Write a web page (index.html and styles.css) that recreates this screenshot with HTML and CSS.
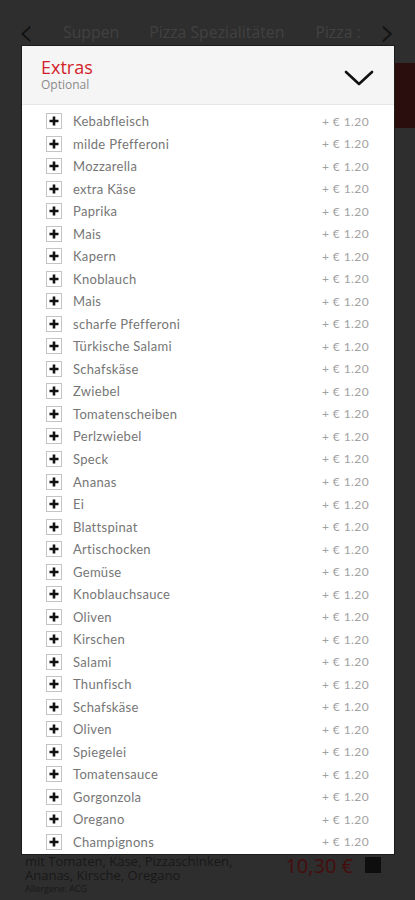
FILE: index.html
```html
<!DOCTYPE html>
<html lang="de">
<head>
<meta charset="utf-8">
<title>Extras</title>
<link rel="stylesheet" href="styles.css">
</head>
<body>
<div class="page">
  <nav class="tabs">
    <span class="arrow">&#x2039;</span>
    <span class="tab t1">Suppen</span>
    <span class="tab t2">Pizza Spezialitäten</span>
    <span class="tab t3">Pizza :</span>
    <span class="arrow right">&#x203A;</span>
  </nav>
  <div class="banner"></div>
  <div class="spacer"></div>
  <div class="product">
    <div class="desc">
      <div>mit Tomaten, Käse, Pizzaschinken,</div>
      <div>Ananas, Kirsche, Oregano</div>
      <div class="allergy">Allergene: ACG</div>
    </div>
    <div class="price">10,30 €</div>
    <div class="addbtn"></div>
  </div>
</div>

<div class="modal">
  <div class="modal-head">
    <div>
      <div class="title">Extras</div>
      <div class="subtitle">Optional</div>
    </div>
    <svg class="chev" width="30" height="16" viewBox="0 0 30 16"><path d="M2 2 L15 14 L28 2" fill="none" stroke="#111" stroke-width="2.6" stroke-linecap="round" stroke-linejoin="round"/></svg>
  </div>
  <ul class="list" id="list"></ul>
</div>
<script src="app.js"></script>
</body>
</html>
```
FILE: app.js
```js
const items = ["Kebabfleisch","milde Pfefferoni","Mozzarella","extra Käse","Paprika","Mais","Kapern","Knoblauch","Mais","scharfe Pfefferoni","Türkische Salami","Schafskäse","Zwiebel","Tomatenscheiben","Perlzwiebel","Speck","Ananas","Ei","Blattspinat","Artischocken","Gemüse","Knoblauchsauce","Oliven","Kirschen","Salami","Thunfisch","Schafskäse","Oliven","Spiegelei","Tomatensauce","Gorgonzola","Oregano","Champignons"];
const list = document.getElementById('list');
const box = '<svg class="cb" width="16" height="16" viewBox="0 0 16 16"><rect x="0.5" y="0.5" width="15" height="15" fill="#fff" stroke="#c4c4c4"/><path d="M8 3.5 V12.5 M3.5 8 H12.5" stroke="#111" stroke-width="2.6"/></svg>';
list.innerHTML = items.map(n => `<li class="row">${box}<span class="name">${n}</span><span class="cost">+ € 1.20</span></li>`).join('');
```
FILE: styles.css
```css
html, body {
  margin: 0;
  padding: 0;
}
body {
  width: 415px;
  height: 900px;
  overflow: hidden;
  background: #2e2e2e;
  font-family: "Open Sans", "Liberation Sans", sans-serif;
  position: relative;
}
.page {
  height: 900px;
  display: flex;
  flex-direction: column;
}
.tabs {
  display: flex;
  align-items: center;
  height: 48px;
  padding: 16px 0 0 18px;
  box-sizing: border-box;
  color: #414141;
  font-size: 15.8px;
}
.tabs .arrow {
  font-size: 40px;
  line-height: 30px;
  color: #121212;
  font-family: "DejaVu Sans", sans-serif;
  font-weight: 300;
}
.tabs .tab { white-space: nowrap; }
.tabs .t1 { margin-left: 29px; }
.tabs .t2 { margin-left: 30px; }
.tabs .t3 { margin-left: 31px; }
.tabs .right { margin-left: 19px; }
.banner {
  margin-top: 15px;
  height: 65px;
  width: 60px;
  align-self: flex-end;
  background: #2a0e0e;
}
.spacer { flex: 1; }
.product {
  display: flex;
  align-items: flex-start;
  padding: 0 34px 0 25px;
  height: 46px;
  color: #181818;
}
.desc {
  flex: 1;
  font-size: 13px;
  line-height: 14px;
}
.allergy {
  font-size: 9px;
  line-height: 13px;
}
.price {
  color: #460d0d;
  font-size: 20px;
  line-height: 24px;
  margin-right: 12px;
}
.addbtn {
  width: 16px;
  height: 16px;
  margin-top: 3px;
  background: #0e0e0e;
}
.modal {
  position: absolute;
  left: 21px;
  top: 45px;
  width: 374px;
  height: 810px;
  background: #fff;
  border: 1px solid #1c1c1c;
  box-sizing: border-box;
  overflow: hidden;
}
.modal-head {
  display: flex;
  align-items: flex-start;
  justify-content: space-between;
  padding: 10px 20px 0 19px;
  background: #f5f5f5;
  border-bottom: 1px solid #e6e6e6;
  box-sizing: content-box;
  height: 48px;
}
.title {
  color: #d21f2a;
  font-size: 18px;
  line-height: 22px;
}
.subtitle {
  color: #8a8a8a;
  font-size: 12px;
  line-height: 14px;
}
.chev { margin-top: 14px; }
.list {
  list-style: none;
  margin: 0;
  padding: 5px 25px 0 24px;
}
.row {
  display: flex;
  align-items: center;
  height: 22.53px;
  font-family: "Lato", "Liberation Sans", sans-serif;
}
.cb { flex: none; }
.name {
  flex: 1;
  margin-left: 11px;
  color: #767676;
  font-size: 13px;
  letter-spacing: 0.3px;
}
.cost {
  color: #a2a2a2;
  font-size: 12px;
  letter-spacing: 0.4px;
}
```
